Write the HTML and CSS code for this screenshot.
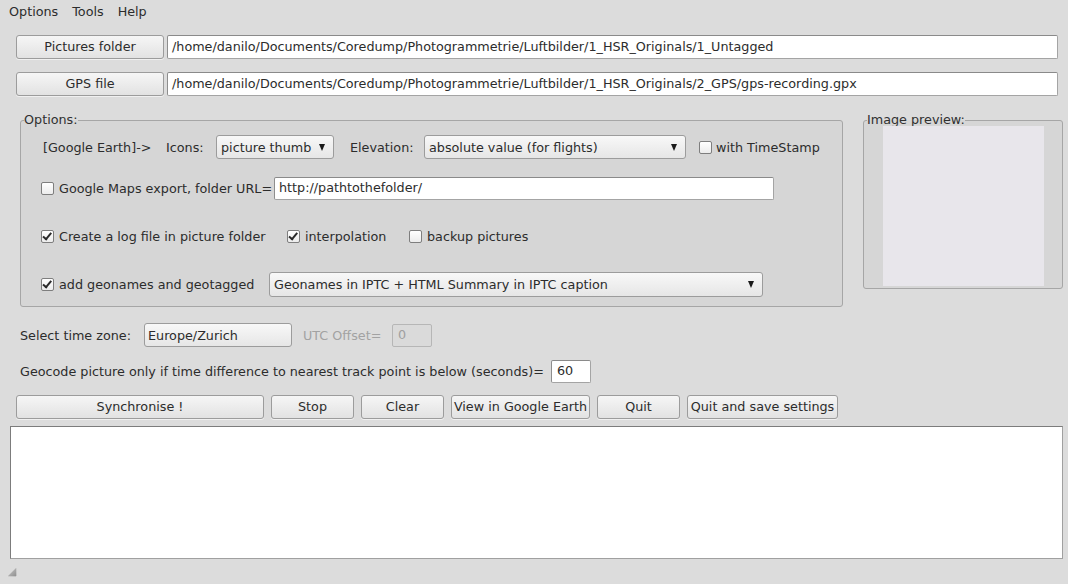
FILE: index.html
```html
<!DOCTYPE html>
<html>
<head>
<meta charset="utf-8">
<link rel="stylesheet" href="styles.css">
</head>
<body>
<div class="menubar">
  <span class="menu">Options</span><span class="menu">Tools</span><span class="menu">Help</span>
</div>

<div class="pathrow first">
  <div class="btn pathbtn">Pictures folder</div>
  <div class="input path">/home/danilo/Documents/Coredump/Photogrammetrie/Luftbilder/1_HSR_Originals/1_Untagged</div>
</div>
<div class="pathrow second">
  <div class="btn pathbtn">GPS file</div>
  <div class="input path">/home/danilo/Documents/Coredump/Photogrammetrie/Luftbilder/1_HSR_Originals/2_GPS/gps-recording.gpx</div>
</div>

<div class="groups">
  <fieldset class="group options">
    <legend>Options:</legend>
    <div class="orow r1">
      <span class="lbl w-ge">[Google Earth]-&gt;</span>
      <span class="lbl w-icons">Icons:</span>
      <div class="combo w-thumb"><span>picture thumb</span><span class="arrow"></span></div>
      <span class="lbl w-elev">Elevation:</span>
      <div class="combo w-elevc"><span>absolute value (for flights)</span><span class="arrow"></span></div>
      <span class="cb ts"></span><span class="lbl">with TimeStamp</span>
    </div>
    <div class="orow r2">
      <span class="cb"></span><span class="lbl w-gm">Google Maps export, folder URL=</span>
      <div class="input url">http://pathtothefolder/</div>
    </div>
    <div class="orow r3">
      <span class="cb on"></span><span class="lbl w-log">Create a log file in picture folder</span>
      <span class="cb on"></span><span class="lbl w-int">interpolation</span>
      <span class="cb"></span><span class="lbl">backup pictures</span>
    </div>
    <div class="orow r4">
      <span class="cb on"></span><span class="lbl w-geo">add geonames and geotagged</span>
      <div class="combo w-geoc"><span>Geonames in IPTC + HTML Summary in IPTC caption</span><span class="arrow"></span></div>
    </div>
  </fieldset>

  <fieldset class="group preview">
    <legend>Image preview:</legend>
    <div class="previewbox"></div>
  </fieldset>
</div>

<div class="line tz">
  <span class="lbl w-tz">Select time zone:</span>
  <div class="combo tzc"><span>Europe/Zurich</span></div>
  <span class="lbl disabled w-utc">UTC Offset=</span>
  <div class="input small disabled-in">0</div>
</div>

<div class="line geo">
  <span class="lbl w-geocode">Geocode picture only if time difference to nearest track point is below (seconds)=</span>
  <div class="input small">60</div>
</div>

<div class="actions">
  <div class="btn b-sync">Synchronise !</div>
  <div class="btn b-std">Stop</div>
  <div class="btn b-std">Clear</div>
  <div class="btn b-view">View in Google Earth</div>
  <div class="btn b-std">Quit</div>
  <div class="btn b-save">Quit and save settings</div>
</div>

<div class="log"></div>

<div class="status">
  <svg class="grip" width="10" height="10" viewBox="0 0 10 10">
    <defs>
      <linearGradient id="g" x1="0" y1="0" x2="1" y2="1">
        <stop offset="0" stop-color="#d0d0d0"/>
        <stop offset="1" stop-color="#8a8a8a"/>
      </linearGradient>
    </defs>
    <polygon points="10,0 10,10 0,10" fill="url(#g)"/>
    <polyline points="0,10 10,10 10,0" fill="none" stroke="#f4f4f4" stroke-width="1"/>
  </svg>
</div>
</body>
</html>
```

FILE: styles.css
```css
html, body {
  margin: 0;
  padding: 0;
}
body {
  width: 1068px;
  height: 584px;
  overflow: hidden;
  background: #dcdcdc;
  font-family: "DejaVu Sans", "Liberation Sans", sans-serif;
  font-size: 12.75px;
  color: #2c2c2c;
}

.menubar {
  height: 23px;
  display: flex;
  align-items: center;
  padding-left: 2px;
}
.menu {
  padding: 0 7px;
  line-height: 23px;
}

.btn {
  box-sizing: border-box;
  height: 24px;
  border: 1px solid #9c9c9c;
  border-radius: 3px;
  background: linear-gradient(#f6f6f6, #e2e2e2);
  display: flex;
  align-items: center;
  justify-content: center;
  white-space: nowrap;
  box-shadow: 0 1px 0 #f0f0f0;
  padding-bottom: 1px;
}

.input {
  box-sizing: border-box;
  height: 24px;
  background: #ffffff;
  border: 1px solid #a4a4a4;
  border-top-color: #8a8a8a;
  border-left-color: #8e8e8e;
  border-radius: 2px;
  padding-left: 4px;
  padding-bottom: 1px;
  display: flex;
  align-items: center;
  white-space: nowrap;
  overflow: hidden;
}

.pathrow {
  display: flex;
  margin-left: 16px;
  margin-right: 10px;
}
.pathrow.first { margin-top: 12px; }
.pathrow.second { margin-top: 13px; }
.pathbtn { width: 148px; margin-right: 3px; }
.path { flex: 1; }

.groups {
  display: flex;
  align-items: flex-start;
  margin-left: 20px;
  margin-top: 17px;
  gap: 20px;
}

.group {
  margin: 0;
  border: 1px solid #a6a6a6;
  border-radius: 3px;
  background: #d6d6d6;
  min-width: 0;
}
.group legend {
  padding: 0;
  margin-left: 3px;
  line-height: 14px;
  color: #303030;
}
.options legend { margin-left: -17px; }

.options {
  width: 823px;
  box-sizing: border-box;
  padding: 8px 0 10px 20px;
}
.orow {
  display: flex;
  align-items: center;
  height: 24px;
  white-space: nowrap;
}
.r2 { margin-top: 17px; }
.r3 { margin-top: 24px; }
.r4 { margin-top: 24px; }

.lbl { white-space: nowrap; flex: none; }
.w-ge { width: 123px; margin-left: 2px; }
.w-icons { width: 50px; }
.w-elev { width: 74px; margin-left: 16px; }
.w-gm { width: 215px; }
.w-log { width: 228px; }
.w-int { width: 104px; }
.w-geo { width: 210px; }

.combo {
  box-sizing: border-box;
  height: 24px;
  border: 1px solid #9c9c9c;
  border-radius: 3px;
  background: linear-gradient(#f8f8f8, #e6e6e6);
  display: flex;
  align-items: center;
  justify-content: space-between;
  padding: 0 8px 0 4px;
  flex: none;
  white-space: nowrap;
}
.arrow {
  width: 0;
  height: 0;
  border-left: 3.5px solid transparent;
  border-right: 3.5px solid transparent;
  border-top: 7px solid #1a1a1a;
}
.w-thumb { width: 118px; }
.w-elevc { width: 262px; }
.w-geoc { width: 494px; height: 25px; }

.url { width: 500px; height: 23px; }

.cb {
  box-sizing: border-box;
  width: 13px;
  height: 13px;
  flex: none;
  border: 1px solid #7e7e7e;
  border-radius: 2px;
  background: linear-gradient(#ffffff, #ececec);
  margin-right: 5px;
  position: relative;
}
.cb.on::after {
  content: "";
  position: absolute;
  left: 2px;
  top: 0px;
  width: 3px;
  height: 7px;
  border-right: 2px solid #2a2a2a;
  border-bottom: 2px solid #2a2a2a;
  transform: rotate(40deg);
  transform-origin: 60% 60%;
}
.cb.ts { margin-left: 13px; margin-right: 4px; }

.preview {
  width: 200px;
  height: 176px;
  box-sizing: border-box;
  padding: 0;
  display: flex;
  justify-content: center;
}
.previewbox {
  width: 161px;
  height: 160px;
  margin: -1px auto 0;
  background: #e8e6eb;
}

.line {
  display: flex;
  align-items: center;
  margin-left: 20px;
  height: 24px;
}
.tz { margin-top: 16px; }
.geo { margin-top: 12px; }
.w-tz { width: 124px; }
.tzc { width: 148px; padding-left: 3px; }
.w-utc { width: 89px; margin-left: 11px; }
.disabled { color: #a2a2a2; }
.small { width: 40px; height: 23px; padding-left: 5px; }
.disabled-in {
  background: #dadada;
  border-color: #b6b6b6;
  color: #a0a0a0;
}
.w-geocode { width: 531px; }

.actions {
  display: flex;
  gap: 7px;
  margin-left: 16px;
  margin-top: 12px;
}
.b-sync { width: 248px; }
.b-std { width: 83px; }
.b-view { width: 139px; }
.b-save { width: 151px; }

.log {
  box-sizing: border-box;
  margin-left: 10px;
  margin-top: 7px;
  width: 1053px;
  height: 133px;
  background: #ffffff;
  border: 1px solid #a0a0a0;
  border-top-color: #7c7c7c;
  border-left-color: #7c7c7c;
}

.status {
  height: 25px;
  display: flex;
  align-items: flex-end;
  padding-left: 7px;
}
.grip { display: block; margin-bottom: 7px; }
```
